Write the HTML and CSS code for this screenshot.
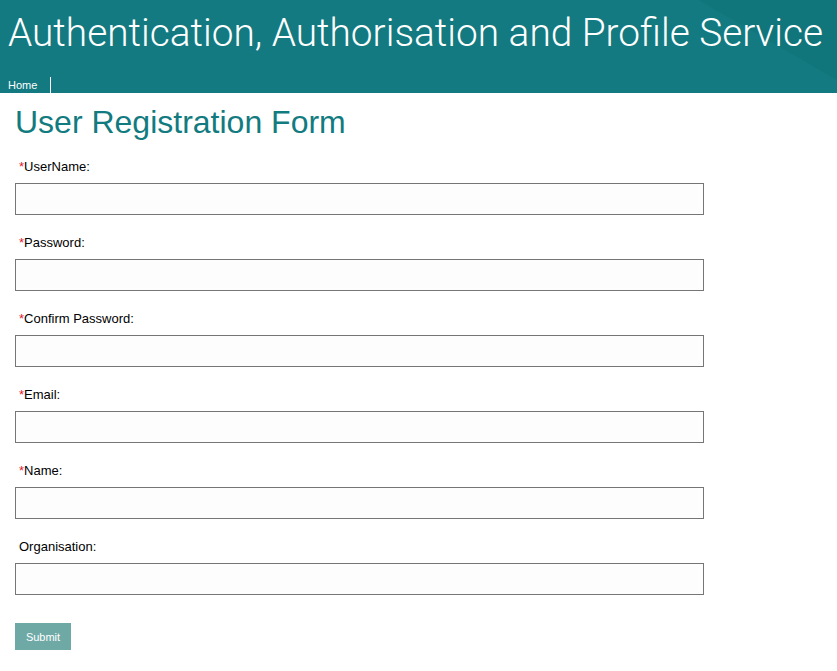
FILE: index.html
```html
<!DOCTYPE html>
<html>
<head>
<meta charset="utf-8">
<link rel="stylesheet" href="styles.css">
</head>
<body>
<header class="header">
  <h1 class="site-title">Authentication, Authorisation and Profile Service</h1>
  <nav class="nav"><a class="nav-link" href="#">Home</a></nav>
</header>
<main class="main">
  <h2 class="page-title">User Registration Form</h2>
  <form class="form">
    <div class="field">
      <label class="label"><span class="req">*</span>UserName:</label>
      <input class="input" type="text">
    </div>
    <div class="field">
      <label class="label"><span class="req">*</span>Password:</label>
      <input class="input" type="password">
    </div>
    <div class="field">
      <label class="label"><span class="req">*</span>Confirm Password:</label>
      <input class="input" type="password">
    </div>
    <div class="field">
      <label class="label"><span class="req">*</span>Email:</label>
      <input class="input" type="text">
    </div>
    <div class="field">
      <label class="label"><span class="req">*</span>Name:</label>
      <input class="input" type="text">
    </div>
    <div class="field">
      <label class="label">Organisation:</label>
      <input class="input" type="text">
    </div>
    <button class="submit" type="button">Submit</button>
  </form>
</main>
</body>
</html>
```
FILE: styles.css
```css
html, body {
  margin: 0;
  padding: 0;
  background: #ffffff;
}
body {
  font-family: "Liberation Sans", Arial, sans-serif;
  color: #000;
}
.header {
  height: 93px;
  background: linear-gradient(30deg, #127a80 0%, #127a80 86%, #10767b 86.2%, #10767b 100%);
  display: flex;
  flex-direction: column;
  box-sizing: border-box;
}
.site-title {
  margin: 0;
  padding: 10px 0 0 8px;
  font-family: Roboto, "Liberation Sans", sans-serif;
  font-weight: 300;
  font-size: 38.8px;
  line-height: 46px;
  color: #ffffff;
  white-space: nowrap;
}
.nav {
  margin-top: auto;
  display: flex;
  padding-left: 8px;
}
.nav-link {
  color: #ffffff;
  text-decoration: none;
  font-size: 11px;
  line-height: 16px;
  padding-right: 13px;
  border-right: 1px solid #ffffff;
  display: block;
}
.main {
  padding: 0 15px;
}
.page-title {
  margin: 0;
  padding-top: 10px;
  font-weight: normal;
  font-size: 32px;
  line-height: 38px;
  color: #127b80;
}
.form {
  display: flex;
  flex-direction: column;
  padding-top: 18px;
}
.field {
  display: flex;
  flex-direction: column;
  margin-bottom: 20px;
}
.label {
  font-size: 13px;
  line-height: 16px;
  padding-left: 4px;
  margin-bottom: 8px;
}
.req {
  color: #e0202a;
}
.input {
  box-sizing: border-box;
  width: 689px;
  height: 32px;
  border: 1px solid #767676;
  border-radius: 0;
  background: #fdfdfd;
  margin: 0;
  padding: 0 4px;
}
.submit {
  align-self: flex-start;
  margin-top: 8px;
  width: 56px;
  height: 27px;
  border: none;
  background: #6fa9a6;
  color: #ffffff;
  font-family: "Liberation Sans", Arial, sans-serif;
  font-size: 11px;
  padding: 0;
}
```
